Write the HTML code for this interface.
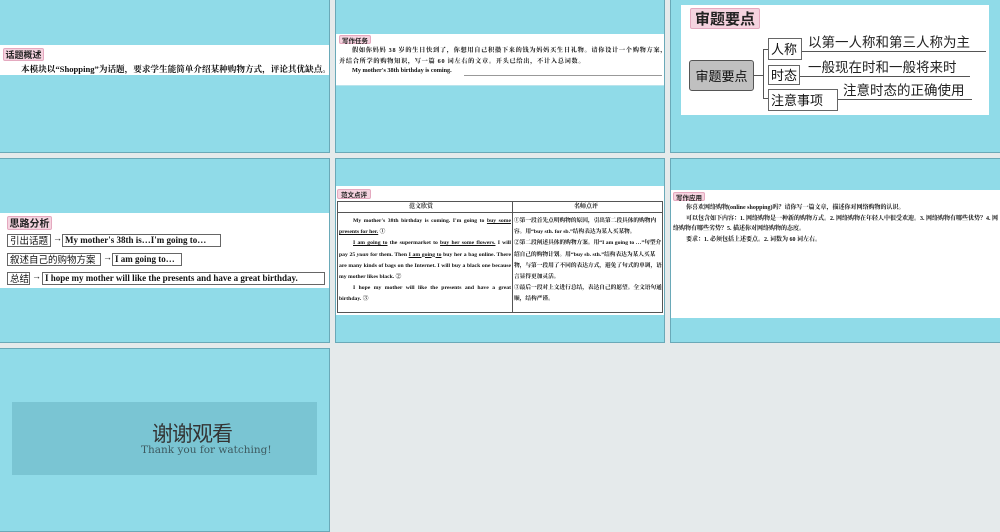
<!DOCTYPE html>
<html><head><meta charset="utf-8"><style>
*{margin:0;padding:0;box-sizing:border-box}
body{width:1000px;height:530px;background:#e5eaeb;position:relative;overflow:hidden;font-family:"Liberation Serif","Noto Serif CJK SC",serif;color:#111}
.s{position:absolute;background:#90dbe8;border:1px solid #6aa9b8}
.a{position:absolute;white-space:nowrap}
.w{position:absolute;background:#fff}
.lab{position:absolute;background:#f5d3df;border:1px solid #e4a9bf;border-radius:2px;font-weight:bold;color:#222;font-family:"Noto Sans CJK SC",sans-serif;text-align:center}
.b{font-weight:bold}
.box{position:absolute;border:1px solid #666;background:#fff;white-space:nowrap;font-weight:bold;padding:0 2px}
.ul{position:absolute;height:1px;background:#555}
.cj{font-family:"Noto Sans CJK SC",sans-serif;font-weight:normal}
</style></head><body>

<!-- Row 1 -->
<div class="s" style="left:-1px;top:-1px;width:331px;height:154px"></div>
<div class="w" style="left:0;top:45px;width:329px;height:30px"></div>
<div class="lab" style="left:3px;top:48px;width:41px;height:13px;font-size:9px;line-height:11px">话题概述</div>
<div class="a b" style="left:21px;top:63px;font-size:8.6px">本模块以“Shopping”为话题，要求学生能简单介绍某种购物方式，评论其优缺点。</div>

<div class="s" style="left:335px;top:-1px;width:330px;height:154px"></div>
<div class="w" style="left:336px;top:34px;width:328px;height:51px"></div>
<div class="ul" style="left:336px;top:85px;width:328px;background:#b9e4ec"></div>
<div class="lab" style="left:339px;top:35px;width:32px;height:9px;font-size:6.5px;line-height:8px">写作任务</div>
<div class="a b" style="left:352px;top:45px;font-size:6.2px;letter-spacing:.7px">假如你妈妈 38 岁的生日快到了，你想用自己积攒下来的钱为妈妈买生日礼物。请你设计一个购物方案，</div>
<div class="a b" style="left:339px;top:56px;font-size:6.2px;letter-spacing:.7px">并结合所学的购物知识，写一篇 60 词左右的文章。开头已给出，不计入总词数。</div>
<div class="a b" style="left:352px;top:67px;font-size:6.2px">My mother's 38th birthday is coming.</div>
<div class="ul" style="left:464px;top:75px;width:198px;background:#999"></div>

<div class="s" style="left:670px;top:-1px;width:331px;height:154px"></div>
<div class="w" style="left:681px;top:5px;width:308px;height:110px"></div>
<div class="lab" style="left:690px;top:8px;width:70px;height:21px;font-size:15px;line-height:19px">审题要点</div>
<div class="a cj" style="left:689px;top:60px;width:65px;height:31px;background:#c0c0c0;border:1px solid #555;border-radius:3px;font-size:13px;line-height:29px;text-align:center">审题要点</div>
<div class="ul" style="left:754px;top:75px;width:10px"></div>
<div class="a" style="left:763px;top:49px;width:1px;height:50px;background:#555"></div>
<div class="ul" style="left:763px;top:49px;width:5px"></div>
<div class="ul" style="left:763px;top:98px;width:5px"></div>
<div class="box cj" style="left:768px;top:38px;width:34px;height:22px;font-size:13px;line-height:20px">人称</div>
<div class="box cj" style="left:768px;top:65px;width:32px;height:20px;font-size:13px;line-height:18px">时态</div>
<div class="box cj" style="left:768px;top:89px;width:70px;height:22px;font-size:13px;line-height:20px">注意事项</div>
<div class="a cj" style="left:808px;top:32px;font-size:13.5px;line-height:18px;color:#222">以第一人称和第三人称为主</div>
<div class="ul" style="left:802px;top:51px;width:184px"></div>
<div class="a cj" style="left:808px;top:57px;font-size:13.5px;line-height:18px;color:#222">一般现在时和一般将来时</div>
<div class="ul" style="left:800px;top:76px;width:170px"></div>
<div class="a cj" style="left:843px;top:80px;font-size:13.5px;line-height:18px;color:#222">注意时态的正确使用</div>
<div class="ul" style="left:838px;top:99px;width:134px"></div>

<!-- Row 2 -->
<div class="s" style="left:-1px;top:158px;width:331px;height:185px"></div>
<div class="w" style="left:0;top:213px;width:329px;height:75px"></div>
<div class="lab" style="left:7px;top:216px;width:45px;height:14px;font-size:10px;line-height:12px">思路分析</div>
<div class="box cj" style="left:7px;top:234px;width:44px;height:13px;font-size:9.5px;line-height:11px">引出话题</div>
<div class="a" style="left:53px;top:233px;font-size:9px">→</div>
<div class="box" style="left:62px;top:234px;width:159px;height:13px;font-size:9px;line-height:11px">My mother's 38th is…I'm going to…</div>
<div class="box cj" style="left:7px;top:253px;width:94px;height:13px;font-size:9.5px;line-height:11px">叙述自己的购物方案</div>
<div class="a" style="left:103px;top:252px;font-size:9px">→</div>
<div class="box" style="left:112px;top:253px;width:70px;height:13px;font-size:9px;line-height:11px">I am going to…</div>
<div class="box cj" style="left:7px;top:272px;width:23px;height:13px;font-size:9.5px;line-height:11px">总结</div>
<div class="a" style="left:32px;top:271px;font-size:9px">→</div>
<div class="box" style="left:42px;top:272px;width:283px;height:13px;font-size:9px;line-height:11px">I hope my mother will like the presents and have a great birthday.</div>

<div class="s" style="left:335px;top:158px;width:330px;height:185px"></div>
<div class="w" style="left:336px;top:186px;width:328px;height:129px"></div>
<div class="lab" style="left:337px;top:189px;width:34px;height:10px;font-size:6.5px;line-height:8px">范文点评</div>
<div class="a" style="left:337px;top:201px;width:326px;height:112px;border:1px solid #555"></div>
<div class="a" style="left:512px;top:201px;width:1px;height:112px;background:#555"></div>
<div class="ul" style="left:337px;top:212px;width:326px"></div>
<div class="a b" style="left:409px;top:203px;font-size:6px;line-height:8px">范文欣赏</div>
<div class="a b" style="left:574px;top:203px;font-size:6px;line-height:8px">名师点评</div>
<div class="a b" style="left:339px;top:216px;font-size:5.7px;line-height:11.2px;white-space:normal;width:172px;text-align:justify">
<div style="text-indent:14px">My mother's 38th birthday is coming. I'm going to <u>buy some presents for her.</u> ①</div>
<div style="text-indent:14px"><u>I am going to</u> the supermarket to <u>buy her some flowers.</u> I will pay 25 <i>yuan</i> for them. Then <u>I am going to</u> buy her a bag online. There are many kinds of bags on the Internet. I will buy a black one because my mother likes black. ②</div>
<div style="text-indent:14px">I hope my mother will like the presents and have a great birthday. ③</div>
</div>
<div class="a b" style="left:514px;top:216px;font-size:5.7px;line-height:11.2px;white-space:normal;width:148px">
<div>①第一段首先点明购物的原因，引出第二段具体的购物内容。用“buy sth. for sb.”结构表达为某人买某物。</div>
<div>②第二段阐述具体的购物方案。用“I am going to …”句型介绍自己的购物计划。用“buy sb. sth.”结构表达为某人买某物，与第一段用了不同的表达方式，避免了句式的单调，语言显得更加灵活。</div>
<div>③最后一段对上文进行总结，表达自己的愿望。全文语句通顺，结构严谨。</div>
</div>

<div class="s" style="left:670px;top:158px;width:331px;height:185px"></div>
<div class="w" style="left:671px;top:190px;width:329px;height:128px"></div>
<div class="lab" style="left:673px;top:192px;width:32px;height:9px;font-size:6.5px;line-height:8px">写作应用</div>
<div class="a b" style="left:686px;top:203px;font-size:6px;line-height:10.5px;white-space:normal;width:312px">
<div>你喜欢网络购物(online shopping)吗？请你写一篇文章，描述你对网络购物的认识。</div>
<div style="margin-left:-13px;text-indent:13px">可以包含如下内容：1. 网络购物是一种新的购物方式。2. 网络购物在年轻人中很受欢迎。3. 网络购物有哪些优势？4. 网络购物有哪些劣势？5. 描述你对网络购物的态度。</div>
<div>要求：1. 必须包括上述要点。2. 词数为 60 词左右。</div>
</div>

<!-- Row 3 -->
<div class="s" style="left:-1px;top:348px;width:331px;height:184px"></div>
<div class="a" style="left:12px;top:402px;width:305px;height:73px;background:#7ac5d3"></div>
<div class="a cj" style="left:152px;top:422px;font-size:21px;line-height:22px;color:#333;letter-spacing:-1px">谢谢观看</div>
<div class="a" style="left:141px;top:444px;font-size:10.5px;line-height:12px;color:#3d5a60;font-family:'DejaVu Serif',serif">Thank you for watching!</div>

</body></html>
